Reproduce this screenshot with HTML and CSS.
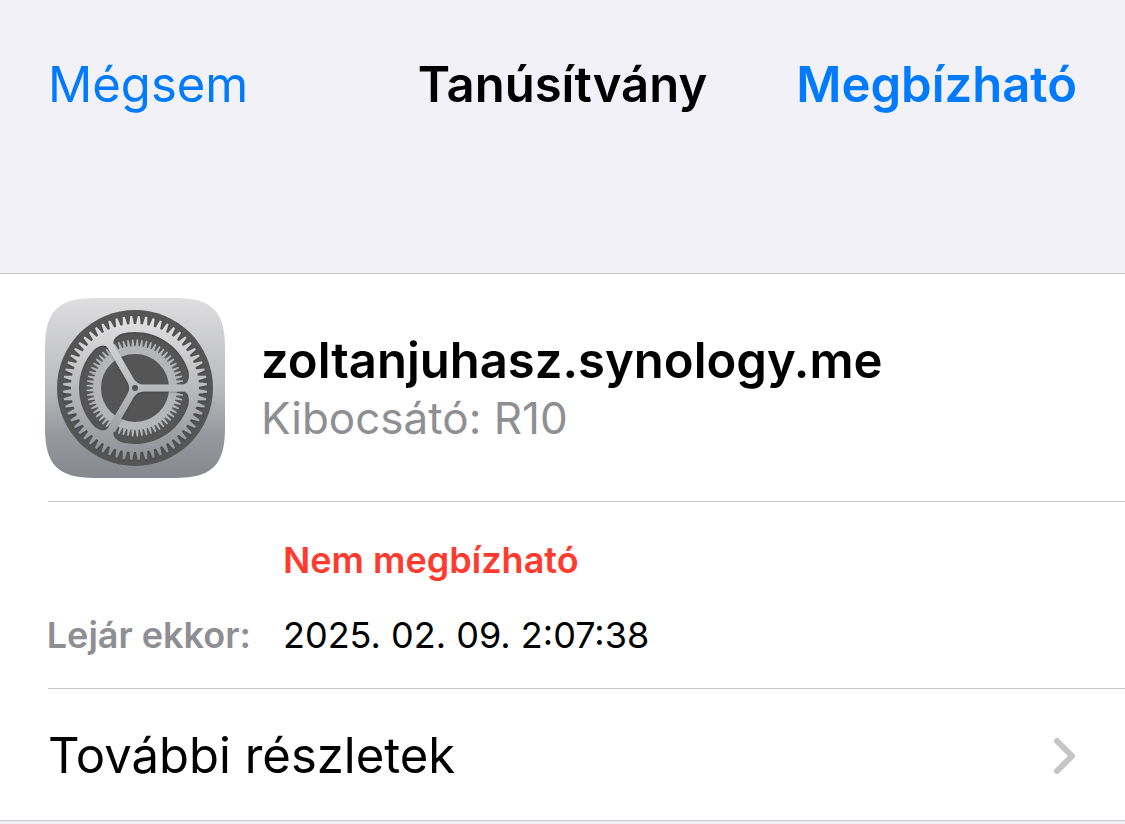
FILE: index.html
```
<!DOCTYPE html>
<html lang="hu">
<head>
    <meta charset="UTF-8">
    <meta name="viewport" content="width=device-width, initial-scale=1">
    <title>Tanúsítvány</title>
    <link rel="stylesheet" href="styles.css">
</head>
<body>
    <header class="navbar">
        <button type="button" class="nav-button">Mégsem</button>
        <h1 class="title">Tanúsítvány</h1>
        <button type="button" class="nav-button trust">Megbízható</button>
    </header>

    <main class="sheet">
        <section class="certificate">
            <svg class="app-icon" viewBox="0 0 180 180" aria-hidden="true">
                <defs>
                    <linearGradient id="metal" gradientUnits="userSpaceOnUse" x1="0" y1="0" x2="0" y2="180">
                        <stop offset="0" stop-color="#dededf"/>
                        <stop offset="0.5" stop-color="#b9babd"/>
                        <stop offset="0.75" stop-color="#969a9e"/>
                        <stop offset="1" stop-color="#85898e"/>
                    </linearGradient>
                    <linearGradient id="gearMetal" gradientUnits="userSpaceOnUse" x1="0" y1="-72" x2="0" y2="72">
                        <stop offset="0" stop-color="#e2e2e3"/>
                        <stop offset="0.5" stop-color="#b9babc"/>
                        <stop offset="1" stop-color="#8d9195"/>
                    </linearGradient>
                    <filter id="shadow" x="-10%" y="-10%" width="120%" height="120%">
                        <feDropShadow dx="0" dy="1" stdDeviation="1" flood-color="#000" flood-opacity="0.25"/>
                    </filter>

                    <!-- 60 outer teeth: 5 x 4 x 3 -->
                    <path id="tooth" d="M-2.4 -63L-1 -72H1L2.4 -63Z" transform="rotate(3)"/>
                    <g id="teeth5">
                        <use href="#tooth"/>
                        <use href="#tooth" transform="rotate(6)"/>
                        <use href="#tooth" transform="rotate(12)"/>
                        <use href="#tooth" transform="rotate(18)"/>
                        <use href="#tooth" transform="rotate(24)"/>
                    </g>
                    <g id="teeth20">
                        <use href="#teeth5"/>
                        <use href="#teeth5" transform="rotate(30)"/>
                        <use href="#teeth5" transform="rotate(60)"/>
                        <use href="#teeth5" transform="rotate(90)"/>
                    </g>

                    <!-- 64 inner teeth: 4 x 4 x 4 -->
                    <path id="cog" d="M-1.5 -41.5L-0.7 -48.5H0.7L1.5 -41.5Z" transform="rotate(2.8125)"/>
                    <g id="cogs4">
                        <use href="#cog"/>
                        <use href="#cog" transform="rotate(5.625)"/>
                        <use href="#cog" transform="rotate(11.25)"/>
                        <use href="#cog" transform="rotate(16.875)"/>
                    </g>
                    <g id="cogs16">
                        <use href="#cogs4"/>
                        <use href="#cogs4" transform="rotate(22.5)"/>
                        <use href="#cogs4" transform="rotate(45)"/>
                        <use href="#cogs4" transform="rotate(67.5)"/>
                    </g>

                    <path id="opening" d="M9 -3.5H48C53 -3.5 55 -10 53.55 -16.4A56 56 0 0 0 -12.57 -54.58C-18.84 -52.63 -23.47 -47.65 -20.97 -43.32L-1.47 -9.54Q2.02 -3.5 9 -3.5Z"/>
                    <mask id="wheel" maskUnits="userSpaceOnUse" x="-80" y="-80" width="160" height="160">
                        <g fill="#fff">
                            <circle r="64"/>
                            <use href="#teeth20"/>
                            <use href="#teeth20" transform="rotate(120)"/>
                            <use href="#teeth20" transform="rotate(240)"/>
                        </g>
                        <g fill="#000">
                            <use href="#opening"/>
                            <use href="#opening" transform="rotate(120)"/>
                            <use href="#opening" transform="rotate(240)"/>
                            <circle r="3"/>
                        </g>
                    </mask>
                </defs>

                <path fill="url(#metal)" d="M50 0H130C167 0 180 13 180 50V130C180 167 167 180 130 180H50C13 180 0 167 0 130V50C0 13 13 0 50 0Z"/>
                <g transform="translate(90 90)">
                    <circle r="78" fill="#555"/>
                    <g fill="#b4b6b9">
                        <circle r="38" fill="none" stroke="#b4b6b9" stroke-width="8"/>
                        <use href="#cogs16"/>
                        <use href="#cogs16" transform="rotate(90)"/>
                        <use href="#cogs16" transform="rotate(180)"/>
                        <use href="#cogs16" transform="rotate(270)"/>
                    </g>
                    <g filter="url(#shadow)">
                        <circle r="74" fill="url(#gearMetal)" mask="url(#wheel)"/>
                    </g>
                </g>
            </svg>
            <div class="identity">
                <h2 class="host">zoltanjuhasz.synology.me</h2>
                <p class="issuer">Kibocsátó: R10</p>
            </div>
        </section>

        <dl class="details">
            <dd class="status">Nem megbízható</dd>
            <dt>Lejár ekkor:</dt>
            <dd>2025. 02. 09. 2:07:38</dd>
        </dl>

        <a class="more" href="#">
            <span>További részletek</span>
            <svg class="chevron" viewBox="0 0 22 36" aria-hidden="true">
                <path d="M3 3L18 18L3 33"/>
            </svg>
        </a>
    </main>
</body>
</html>
```
FILE: styles.css
```
* {
    box-sizing: border-box;
}

body {
    margin: 0;
    font-family: Inter, "Liberation Sans", sans-serif;
    font-size: 49px;
    line-height: 60px;
    color: #000;
    background-color: #f2f1f7;
}

h1, h2, p, dl, dd {
    margin: 0;
    font-size: inherit;
}

.navbar {
    display: grid;
    grid-template-columns: 1fr auto 1fr;
    align-items: center;
    padding: 55px 48px 158px;
}

.nav-button {
    justify-self: start;
    padding: 0;
    border: none;
    background: none;
    font: inherit;
    color: #007aff;
    cursor: pointer;
}

.trust {
    justify-self: end;
    font-weight: 600;
}

.title {
    font-weight: 600;
}

.sheet {
    padding-left: 48px;
    background-color: #fff;
    border-top: 1px solid #c6c6c8;
    border-bottom: 1px solid #c6c6c8;
}

.certificate {
    display: flex;
    align-items: center;
    gap: 36px;
    margin-left: -3px;
    padding: 24px 0 23px;
}

.app-icon {
    flex: none;
    width: 180px;
    height: 180px;
}

.host {
    font-weight: 600;
}

.issuer {
    font-size: 44px;
    line-height: 54px;
    color: #8e8e93;
}

.details {
    display: grid;
    grid-template-columns: 203px 1fr;
    gap: 27px 32px;
    padding: 34px 0 29px;
    border-top: 1px solid #c6c6c8;
    border-bottom: 1px solid #c6c6c8;
    font-size: 36px;
    line-height: 48px;
}

.details dt {
    justify-self: end;
    white-space: nowrap;
    font-weight: 600;
    color: #8e8e93;
}

.details .status {
    grid-column: 2;
    font-weight: 600;
    color: #ff3b30;
}

.more {
    display: flex;
    align-items: center;
    justify-content: space-between;
    padding: 37px 49px 34px 0;
    color: inherit;
    text-decoration: none;
}

.chevron {
    width: 22px;
    height: 36px;
    fill: none;
    stroke: #c5c5c7;
    stroke-width: 6;
    stroke-linecap: round;
    stroke-linejoin: round;
}
```
